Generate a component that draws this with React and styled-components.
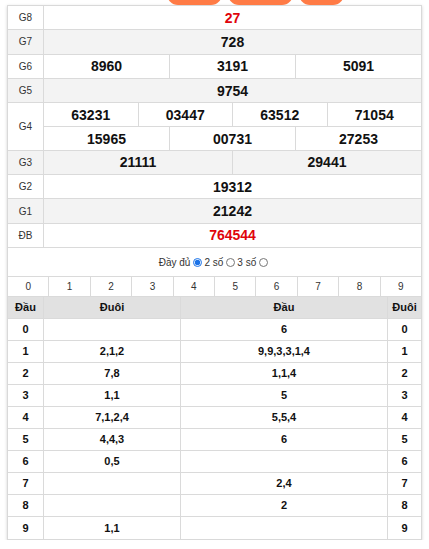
import React from 'react';
import styled, { createGlobalStyle } from 'styled-components';

const GlobalStyle = createGlobalStyle`
  * { box-sizing: border-box; }
  body {
    margin: 0;
    background: #fff;
    font-family: "Liberation Sans", Arial, sans-serif;
    color: #222;
  }
`;

const Page = styled.div`
  width: 429px;
  padding: 0 7px;
`;

const TabStrip = styled.div`
  display: flex;
  align-items: flex-end;
  gap: 6px;
  height: 5px;
  overflow: hidden;
  padding-left: 160px;
`;

const Tab = styled.div`
  width: ${(p) => p.$w}px;
  height: 28px;
  flex-shrink: 0;
  border-radius: 11px;
  background: #ff7b46;
`;

const Board = styled.div`
  width: 415px;
  border: 1px solid #d9d9d9;
  background: #fff;
  box-shadow: 0 1px 3px rgba(0, 0, 0, 0.18);
`;

const PrizeRow = styled.div`
  display: flex;
  background: ${(p) => (p.$alt ? '#f3f3f3' : '#fff')};
  border-bottom: 1px solid #dadada;
`;

const Label = styled.div`
  width: 36px;
  flex-shrink: 0;
  display: flex;
  align-items: center;
  justify-content: center;
  border-right: 1px solid #dadada;
  font-size: 10px;
  color: #333;
`;

const Lines = styled.div`
  flex: 1;
  display: flex;
  flex-direction: column;
`;

const Line = styled.div`
  display: flex;
  height: 23.3px;
  & + & {
    border-top: 1px solid #dadada;
  }
`;

const Num = styled.div`
  flex: 1;
  display: flex;
  align-items: center;
  justify-content: center;
  font-size: 14px;
  font-weight: bold;
  color: ${(p) => (p.$red ? '#e0040b' : '#111')};
  & + & {
    border-left: 1px solid #dadada;
  }
`;

const Options = styled.div`
  height: 28px;
  display: flex;
  align-items: center;
  justify-content: center;
  font-size: 10px;
  color: #333;
  padding-top: 1px;
`;

const Radio = styled.input.attrs({ type: 'radio' })`
  width: 9px;
  height: 9px;
  margin: 0 2px 0 3px;
  accent-color: #1a73e8;
`;

const Heads = styled.div`
  display: flex;
  height: 21px;
  border-top: 1px solid #dadada;
  border-bottom: 1px solid #dadada;
`;

const Head = styled.div`
  flex: 1;
  display: flex;
  align-items: center;
  justify-content: center;
  font-size: 10px;
  color: #333;
  & + & {
    border-left: 1px solid #dadada;
  }
`;

const Loto = styled.div`
  display: grid;
  grid-template-columns: 36px 137px 207px 1fr;
`;

const Cell = styled.div`
  height: ${(p) => (p.$head ? 22 : 22)}px;
  display: flex;
  align-items: center;
  justify-content: center;
  font-size: 11px;
  font-weight: bold;
  color: #111;
  background: ${(p) => (p.$head ? '#e1e1e1' : '#fff')};
  border-right: ${(p) => (p.$last ? 'none' : '1px solid #dadada')};
  border-bottom: ${(p) => (p.$end ? 'none' : '1px solid #dadada')};
`;

const prizes = [
  { label: 'G8', lines: [['27']], red: true },
  { label: 'G7', lines: [['728']] },
  { label: 'G6', lines: [['8960', '3191', '5091']] },
  { label: 'G5', lines: [['9754']] },
  { label: 'G4', lines: [['63231', '03447', '63512', '71054'], ['15965', '00731', '27253']] },
  { label: 'G3', lines: [['21111', '29441']] },
  { label: 'G2', lines: [['19312']] },
  { label: 'G1', lines: [['21242']] },
  { label: 'ĐB', lines: [['764544']], red: true },
];

const loto = [
  ['', '6'],
  ['2,1,2', '9,9,3,3,1,4'],
  ['7,8', '1,1,4'],
  ['1,1', '5'],
  ['7,1,2,4', '5,5,4'],
  ['4,4,3', '6'],
  ['0,5', ''],
  ['', '2,4'],
  ['', '2'],
  ['1,1', ''],
];

export default function App() {
  return (
    <Page>
      <GlobalStyle />
      <TabStrip>
        <Tab $w={55} />
        <Tab $w={65} />
        <Tab $w={45} />
      </TabStrip>
      <Board>
        {prizes.map((p, i) => (
          <PrizeRow key={p.label} $alt={i % 2 === 1}>
            <Label>{p.label}</Label>
            <Lines>
              {p.lines.map((line, j) => (
                <Line key={j}>
                  {line.map((n) => (
                    <Num key={n} $red={p.red}>{n}</Num>
                  ))}
                </Line>
              ))}
            </Lines>
          </PrizeRow>
        ))}
        <Options>
          Đầy đủ <Radio name="mode" defaultChecked /> 2 số <Radio name="mode" /> 3 số <Radio name="mode" />
        </Options>
        <Heads>
          {[0, 1, 2, 3, 4, 5, 6, 7, 8, 9].map((d) => (
            <Head key={d}>{d}</Head>
          ))}
        </Heads>
        <Loto>
          <Cell $head>Đầu</Cell>
          <Cell $head>Đuôi</Cell>
          <Cell $head>Đầu</Cell>
          <Cell $head $last>Đuôi</Cell>
          {loto.map(([tail, head], i) => {
            const end = i === loto.length - 1;
            return (
              <React.Fragment key={i}>
                <Cell $end={end}>{i}</Cell>
                <Cell $end={end}>{tail}</Cell>
                <Cell $end={end}>{head}</Cell>
                <Cell $end={end} $last>{i}</Cell>
              </React.Fragment>
            );
          })}
        </Loto>
      </Board>
    </Page>
  );
}
